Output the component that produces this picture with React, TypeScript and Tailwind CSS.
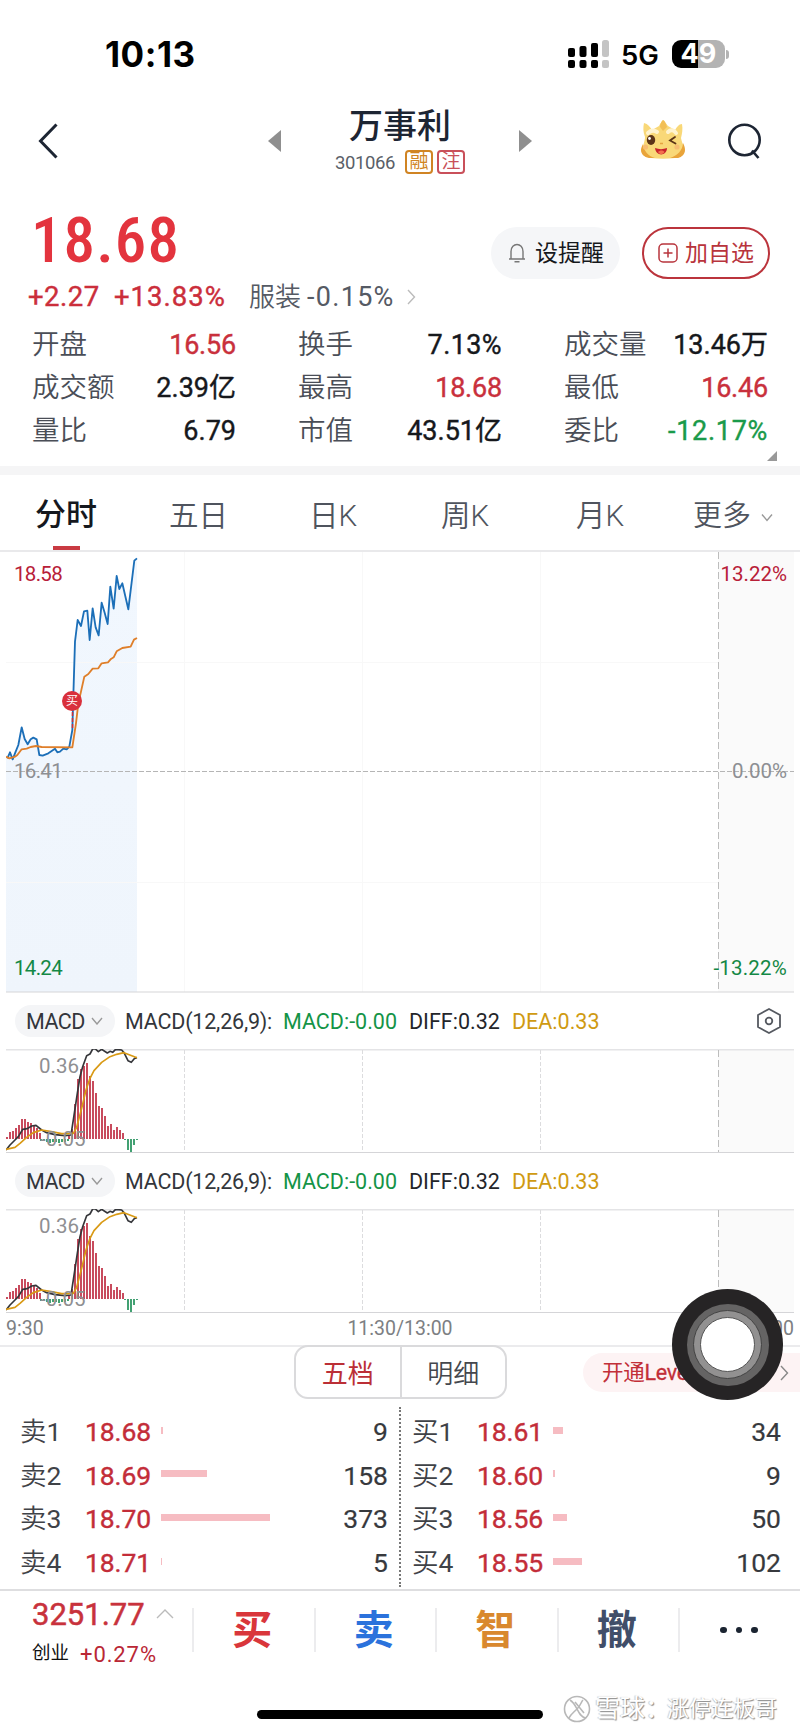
type Quote = { label: string; value: string; style?: string };
type Level = { name: string; price: string; width: number; volume: string };

const QUOTES: Quote[] = [
  { label: "开盘", value: "16.56", style: "text-[#c9303c] tracking-[-0.2px]" },
  { label: "换手", value: "7.13%", style: "text-[#16181c] tracking-[0.4px]" },
  { label: "成交量", value: "13.46万" },
  { label: "成交额", value: "2.39亿" },
  { label: "最高", value: "18.68", style: "text-[#c9303c] tracking-[-0.2px]" },
  { label: "最低", value: "16.46", style: "text-[#c9303c] tracking-[-0.2px]" },
  { label: "量比", value: "6.79" },
  { label: "市值", value: "43.51亿" },
  { label: "委比", value: "-12.17%", style: "text-[#1a9a4a] tracking-[0.7px]" },
];

const SELLS: Level[] = [
  { name: "卖1", price: "18.68", width: 2, volume: "9" },
  { name: "卖2", price: "18.69", width: 46, volume: "158" },
  { name: "卖3", price: "18.70", width: 109, volume: "373" },
  { name: "卖4", price: "18.71", width: 1, volume: "5" },
];

const BUYS: Level[] = [
  { name: "买1", price: "18.61", width: 10, volume: "34" },
  { name: "买2", price: "18.60", width: 2, volume: "9" },
  { name: "买3", price: "18.56", width: 14, volume: "50" },
  { name: "买4", price: "18.55", width: 29, volume: "102" },
];

const ACTIONS = [
  { text: "买", color: "text-[#d9363b]" },
  { text: "卖", color: "text-[#2b72dc]" },
  { text: "智", color: "text-[#d9882e]" },
  { text: "撤", color: "text-[#414e69]" },
];

// Chart lines are plotted at 3 units per pixel
const PRICE_LINE =
  "22,655 30,637 38,658 47,635 55,615 65,562 74,597 83,613 92,598 100,593 110,598 118,645 128,647 145,640 165,626 172,637 180,635 190,626 200,628 208,620 217,570 219,500 225,305 233,240 243,258 252,214 262,212 269,300 278,205 287,262 296,286 305,188 314,218 323,252 331,140 341,206 350,108 358,147 367,130 385,208 403,62 411,55";
const AVG_LINE =
  "18,650 28,655 45,650 52,645 65,628 80,626 92,621 108,618 125,621 217,622 228,550 235,490 243,455 253,410 265,402 278,386 295,385 305,370 324,367 333,357 341,352 350,334 367,324 392,320 402,299 411,294";
const DIFF_LINE =
  "18,330 30,315 45,300 55,290 68,268 82,266 95,258 108,256 125,270 140,278 165,284 195,287 213,285 220,240 232,160 240,110 248,80 260,47 270,42 278,27 286,27 295,35 305,28 322,39 330,34 338,37 347,28 365,30 372,38 384,62 394,67 404,55 411,53";
const DEA_LINE =
  "18,328 45,322 60,310 80,292 100,278 125,270 150,274 185,281 220,280 230,262 245,205 258,150 270,115 282,92 305,67 330,50 350,43 372,38 411,53";

// [x, top] for red bars, [x, height] for green ones; zero line at y=110
const RED_BARS = [
  [7, 108], [10, 103], [13, 102], [16, 99], [19, 96], [22, 90], [25, 90], [28, 93], [31, 94], [34, 96],
  [37, 99], [40, 104], [69, 107], [72, 100], [75, 75], [78, 50], [81, 40], [84, 37], [87, 34], [90, 47],
  [93, 52], [96, 64], [99, 77], [102, 79], [105, 87], [108, 97], [111, 95], [114, 101], [117, 98],
  [120, 101], [123, 104],
];
const GREEN_BARS = [
  [41, 2], [44, 2], [47, 3], [50, 4], [53, 3], [56, 3], [59, 4], [62, 3], [65, 3], [68, 2],
  [125, 1], [128, 11], [131, 13], [134, 6], [137, 1],
];

function Chevron({ className, d = "M1 1l5 6 5-6", box = "0 0 12 8" }: { className: string; d?: string; box?: string }) {
  return (
    <svg className={className} viewBox={box} fill="none" stroke="currentColor" strokeWidth="1.4">
      <path d={d} />
    </svg>
  );
}

function StatusBar() {
  return (
    <div className="flex h-[94px] items-center pl-[105px] pt-[14px] font-['Inter',sans-serif] text-black">
      <span className="w-[463px] text-[35px] font-bold leading-[36px] tracking-[0.5px]">10:13</span>
      <svg className="h-[30px] w-[42px]" viewBox="0 0 42 30">
        <g fill="#000">
          <rect x="0" y="9" width="7" height="9" rx="2" />
          <rect x="11.5" y="7" width="7" height="11" rx="2" />
          <rect x="23" y="4" width="7" height="14" rx="2" />
          <rect x="0" y="21" width="7" height="8" rx="2" />
          <rect x="11.5" y="21" width="7" height="8" rx="2" />
          <rect x="23" y="21" width="7" height="8" rx="2" />
        </g>
        <rect x="34" y="1" width="7" height="17" rx="2.5" fill="#c4c4c4" />
        <rect x="34" y="21" width="7" height="8" rx="2" fill="#c4c4c4" />
      </svg>
      <span className="ml-[11px] mt-[2px] w-[51px] text-[27.5px] font-semibold leading-[30px]">5G</span>
      <div className="flex h-[28px] w-[53px] items-center justify-center rounded-[9px] bg-[linear-gradient(90deg,#000_50%,#b3b3b3_50%)] text-[27px] font-bold leading-[28px] text-white">
        49
      </div>
      <div className="ml-[1px] h-[9px] w-[3px] rounded-r-full bg-[#b3b3b3]" />
    </div>
  );
}

function Mascot() {
  return (
    <svg className="h-[42px] w-[46px]" viewBox="0 0 46 42">
      <path d="M4 4c4 1 6 4 8 7l7-4c1-2 3-5 4-6 2 1 3 4 5 6l7 4c2-3 4-6 7-6 1 5 0 10-1 14 1 6 4 8 3 14-2 4-5 6-9 6-8 1-16 1-24 0-4-1-7-3-8-7-1-5 2-9 2-14C3 13 3 8 4 4z" fill="#f9d878" />
      <path d="M3 25c0 6 6 13 12 14H9c-5-1-8-4-8-8 0-2 1-4 2-6zM43 24c0 7-6 13-13 15h8c4-1 7-4 7-8 0-3-1-5-2-7z" fill="#e9a43a" />
      <path d="M23 1c2 1 3 4 4 7l-4 4-3-4c0-3 1-5 3-7z" fill="#f2bf56" />
      <path d="M8 14c3-3 6-3 9-1M28 13c3-3 6-2 8 1" stroke="#fff3cf" strokeWidth="4" strokeLinecap="round" fill="none" />
      <ellipse cx="11" cy="21" rx="4.2" ry="5" fill="#5b3317" />
      <circle cx="9.5" cy="19.5" r="1.4" fill="#fff" />
      <path d="M35 18l-5 3.5 5.500 3" stroke="#5b3317" strokeWidth="1.8" fill="none" strokeLinecap="round" />
      <circle cx="5.5" cy="28" r="2.6" fill="#f7bd72" />
      <circle cx="37" cy="28" r="2.6" fill="#f7bd72" />
      <path d="M20 24.500h3" stroke="#e5a441" strokeWidth="1.5" />
      <path d="M15 29c4 1.500 8 1.500 12 0 0 8-11 9-12 0z" fill="#c8232c" />
      <path d="M18 33c2-2 5-2 6.500 0-2 3-5 2.500-6.500 0z" fill="#f2704e" />
    </svg>
  );
}

function TitleBar() {
  return (
    <div className="flex h-[94px] items-center pl-[38px]">
      <svg className="h-[36px] w-[20px]" viewBox="0 0 20 36" fill="none" stroke="#1d2533" strokeWidth="3">
        <path d="M18.500 1.500L2.500 18l16 16.500" />
      </svg>
      <svg className="ml-[210px] h-[22px] w-[13px]" viewBox="0 0 13 22">
        <path d="M13 0v22L0 11z" fill="#8f8f8f" />
      </svg>
      <div className="flex w-[238px] flex-col items-center">
        <h1 className="-mt-[3px] text-[34px] font-medium leading-[44px] text-[#1d2533]">万事利</h1>
        <div className="mt-[1px] flex h-[26px] items-center gap-[4px]">
          <span className="mr-[6px] pt-[2px] text-[18.5px] leading-[26px] tracking-[-0.4px] text-[#5a5f68]">301066</span>
          <span className="flex h-[24px] w-[28px] items-center justify-center rounded-[4px] border-2 border-[#d08423] text-[19px] leading-[20px] text-[#d08423]">融</span>
          <span className="flex h-[24px] w-[28px] items-center justify-center rounded-[4px] border-2 border-[#c9505a] text-[19px] leading-[20px] text-[#c9505a]">注</span>
        </div>
      </div>
      <svg className="h-[22px] w-[13px]" viewBox="0 0 13 22">
        <path d="M0 0v22l13-11z" fill="#8f8f8f" />
      </svg>
      <div className="-mt-[3px] ml-[108px]">
        <Mascot />
      </div>
      <svg className="ml-[41px] h-[36px] w-[36px]" viewBox="0 0 36 36" fill="none" stroke="#1d2533" strokeWidth="2.6">
        <circle cx="17.5" cy="17" r="15.2" />
        <path d="M25 27.500l6.500 7.500" />
      </svg>
    </div>
  );
}

function Summary() {
  return (
    <section className="h-[278px] pt-[18px]">
      <div className="flex h-[69px] items-center pl-[31px]">
        <span className="w-[460px] text-[63px] font-medium leading-[68px] tracking-[1.1px] text-[#e3343e] [font-stretch:75%]">18.68</span>
        <button className="mt-[24px] flex h-[52px] w-[129px] items-center rounded-full bg-[#f5f6f8] pl-[17px] text-[23px] text-[#16181c]">
          <svg className="mr-[9px] h-[20px] w-[18px]" viewBox="0 0 18 20" fill="none" stroke="#777" strokeWidth="1.4">
            <path d="M1 16h16M3 16V8.500C3 4 6 1.500 9 1.500S15 4 15 8.500V16M6.500 18.800h5" />
          </svg>
          <span className="pt-[4px]">设提醒</span>
        </button>
        <button className="ml-[22px] mt-[24px] flex h-[52px] w-[128px] items-center rounded-full border-2 border-[#bb343c] pl-[14px] text-[23px] text-[#b8343c]">
          <svg className="mr-[7px] h-[20px] w-[20px]" viewBox="0 0 20 20" fill="none" stroke="#b8343c" strokeWidth="1.5">
            <rect x="1" y="1" width="18" height="18" rx="4" />
            <path d="M10 5.500v9M5.500 10h9" />
          </svg>
          <span className="pt-[4px]">加自选</span>
        </button>
      </div>
      <div className="flex h-[44px] items-center pl-[28px] text-[27.5px] leading-[44px]">
        <span className="w-[86px] tracking-[0.5px] text-[#cb2e3b] [-webkit-text-stroke:0.4px]">+2.27</span>
        <span className="w-[135px] tracking-[1px] text-[#cb2e3b] [-webkit-text-stroke:0.4px]">+13.83%</span>
        <span className="w-[58px] text-[26px] font-[350] text-[#555a64]">服装</span>
        <span className="w-[100px] text-[27px] tracking-[1.3px] text-[#555a64]">-0.15%</span>
        <Chevron className="h-[16px] w-[9px] text-[#bbb]" box="0 0 9 16" d="M1 1l6.500 7L1 15" />
      </div>
      <div className="mt-[4px] grid grid-cols-[204px_204px_204px] gap-x-[62px] pl-[32px]">
        {QUOTES.map((q) => (
          <div key={q.label} className="flex h-[43px] items-center justify-between leading-[44px]">
            <span className="text-[27.5px] font-[350] text-[#4a4e57]">{q.label}</span>
            <span className={`text-[27px] [-webkit-text-stroke:0.4px] ${q.style ?? "text-[#16181c]"}`}>{q.value}</span>
          </div>
        ))}
      </div>
      <svg className="-mt-[1px] ml-[767px] h-[10px] w-[10px]" viewBox="0 0 10 10">
        <path d="M10 0v10H0z" fill="#999" />
      </svg>
    </section>
  );
}

function Tabs() {
  const tabs = [
    { text: "五日", width: "w-[140px]" },
    { text: "日K", width: "w-[132px]" },
    { text: "周K", width: "w-[135px]" },
    { text: "月K", width: "w-[117px]" },
  ];
  return (
    <nav className="flex h-[77px] items-end border-b-2 border-[#e9e9eb] pl-[35px] text-[29.5px] leading-[82px] text-[#4f545e]">
      <div className="flex w-[134px] flex-col">
        <span className="h-[72px] text-[31px] font-medium text-[#15181e]">分时</span>
        <span className="ml-[18px] h-[4px] w-[27px] bg-[#c93a42]" />
      </div>
      {tabs.map((t) => (
        <span key={t.text} className={`h-[75px] ${t.width}`}>
          <span className="font-[350]">{t.text}</span>
        </span>
      ))}
      <span className="h-[75px] text-[29px] font-[350]">更多</span>
      <Chevron className="mb-[28px] ml-[10px] h-[9px] w-[12px] text-[#999]" />
    </nav>
  );
}

function PriceChart() {
  return (
    <div className="relative ml-[6px] h-[441px] w-[788px] text-[20.5px] leading-[24px]">
      <svg className="block h-[441px] w-[788px]" viewBox="6 552 788 441" fill="none">
        <defs>
          <linearGradient id="area" x1="0" y1="0" x2="0" y2="1">
            <stop offset="0" stopColor="#f1f7fe" />
            <stop offset="1" stopColor="#eff5fc" />
          </linearGradient>
        </defs>
        <rect x="718" y="552" width="76" height="440" fill="#fafafa" />
        <g transform="translate(0 540) scale(0.3333)">
          <polygon points={`18,655 ${PRICE_LINE} 411,1356 18,1356`} fill="url(#area)" />
        </g>
        <path d="M6 662.500h712M6 882.500h712M184.500 552v440M362.500 552v440M540.500 552v440" stroke="#f8f8f8" />
        <path d="M718.500 552v440" stroke="#bdbdbd" strokeDasharray="7 3" />
        <path d="M6 771.500h788" stroke="#b5b5b5" strokeWidth="1.2" strokeDasharray="5 2" />
        <path d="M6 992h788" stroke="#d5d5d8" strokeWidth="1.2" />
        <g transform="translate(0 540) scale(0.3333)" strokeLinejoin="round" strokeWidth="5.5">
          <polyline points={PRICE_LINE} stroke="#1c6fb8" />
          <polyline points={AVG_LINE} stroke="#df7f2a" />
        </g>
        <path d="M72.500 706v24" stroke="#cb2e3b" strokeWidth="1.5" strokeDasharray="4 2" />
        <circle cx="72" cy="701" r="10" fill="#d9303c" />
      </svg>
      <span className="absolute left-[60px] top-[140px] text-[12px] leading-[18px] text-white">买</span>
      <span className="absolute left-[8px] top-[10px] tracking-[-0.7px] text-[#b82038]">18.58</span>
      <span className="absolute left-[8px] top-[207px] tracking-[-0.7px] text-[#8d8f93]">16.41</span>
      <span className="absolute left-[8px] top-[404px] tracking-[-0.7px] text-[#138845]">14.24</span>
      <span className="absolute right-[7px] top-[10px] text-[#b82038]">13.22%</span>
      <span className="absolute right-[7px] top-[207px] text-[#8d8f93]">0.00%</span>
      <span className="absolute right-[7px] top-[404px] tracking-[0.2px] text-[#138845]">-13.22%</span>
    </div>
  );
}

function MacdPanel({ settings = false }: { settings?: boolean }) {
  return (
    <>
      <div className="flex h-[56px] items-center pl-[15px] text-[21.5px] leading-[34px]">
        <div className="flex h-[32px] w-[100px] items-center rounded-full bg-[#f4f5f7] pl-[11px] pt-[2px] text-[#33363b]">
          <span className="w-[65px] tracking-[-0.5px]">MACD</span>
          <Chevron className="mb-[2px] h-[8px] w-[12px] text-[#999]" />
        </div>
        <span className="ml-[10px] w-[158px] pt-[2px] tracking-[-0.2px] text-[#33363b]">MACD(12,26,9):</span>
        <span className="w-[126px] pt-[2px] text-[#149447]">MACD:-0.00</span>
        <span className="w-[103px] pt-[2px] text-[#24262a]">DIFF:0.32</span>
        <span className="w-[245px] pt-[2px] text-[#cf9a12]">DEA:0.33</span>
        {settings && (
          <svg className="h-[26px] w-[24px]" viewBox="0 0 24 26" fill="none" stroke="#555960" strokeWidth="1.8">
            <path d="M12 1l11 6v12l-11 6-11-6V7z" strokeLinejoin="round" />
            <circle cx="12" cy="13" r="3.3" />
          </svg>
        )}
      </div>
      <div className="relative ml-[6px] h-[104px] w-[788px]">
        <svg className="block h-[104px] w-[788px]" viewBox="6 29 788 104" fill="none">
          <rect x="718" y="29" width="76" height="103" fill="#fafafa" />
          <path d="M6 29.500h788" stroke="#e4e4e6" strokeWidth="2" />
          <path d="M6 132.500h788" stroke="#d5d5d8" />
          <path d="M184.500 30v102M362.500 30v102M540.500 30v102" stroke="#dcdcde" strokeDasharray="4 2" />
          <path d="M718.500 30v102" stroke="#bdbdbd" strokeDasharray="7 3" />
          <g transform="translate(0 9)">
            {RED_BARS.map(([x, y]) => (
              <rect key={x} x={x - 0.8} y={y} width="1.6" height={110 - y} fill="#bb2036" />
            ))}
            {GREEN_BARS.map(([x, h]) => (
              <rect key={x} x={x - 0.8} y="110" width="1.6" height={h} fill="#168a52" />
            ))}
          </g>
          <g transform="translate(0 20) scale(0.3333)" strokeLinejoin="round" strokeWidth="5">
            <polyline points={DIFF_LINE} stroke="#35363a" />
            <polyline points={DEA_LINE} stroke="#d99a15" />
          </g>
        </svg>
        <span className="absolute left-[33px] top-[5px] text-[20.5px] leading-[24px] text-[#8f8f92]">0.36</span>
        <span className="absolute left-[34px] top-[79px] text-[20.5px] leading-[22px] text-[#8f8f92]">-0.05</span>
      </div>
    </>
  );
}

function LevelList({ levels, className }: { levels: Level[]; className: string }) {
  return (
    <div className={`flex flex-col pt-[3px] text-[26.5px] leading-[43px] ${className}`}>
      {levels.map((l) => (
        <div key={l.name} className="flex h-[43.6px] items-center">
          <span className="w-[65px] font-[350] text-[#3f4247]">
            {l.name.charAt(0)}
            <span className="font-normal">{l.name.slice(1)}</span>
          </span>
          <span className="w-[76px] tracking-[-0.1px] text-[#c32d39] [-webkit-text-stroke:0.4px]">{l.price}</span>
          <span className="mb-[3px] h-[7px] bg-[#f6bcc2]" style={{ width: l.width }} />
          <span className="ml-auto text-[#37393d] [-webkit-text-stroke:0.2px]">{l.volume}</span>
        </div>
      ))}
    </div>
  );
}

function OrderBook() {
  return (
    <section className="h-[244px]">
      <div className="flex h-[62px] items-start border-t-2 border-[#ebebed] pl-[294px]">
        <div className="-mt-[2px] flex h-[54px] w-[213px] rounded-[14px] border-2 border-[#dadadc] bg-white text-[26px] leading-[54px]">
          <span className="flex-1 border-r-2 border-[#dadadc] text-center text-[#bb2f36]">五档</span>
          <span className="flex-1 text-center font-[350] text-[#44474d]">明细</span>
        </div>
        <div className="ml-[76px] mt-[6px] flex h-[39px] w-[217px] items-center rounded-l-full bg-[#fdf3f4] pl-[19px]">
          <span className="w-[178px] text-[21.5px] leading-[42px] tracking-[-0.3px] text-[#c22f38]">
            开通<span className="[-webkit-text-stroke:0.3px]">Level-2</span>
          </span>
          <Chevron className="h-[16px] w-[9px] text-[#888]" box="0 0 9 16" d="M1 1l6.500 7L1 15" />
        </div>
      </div>
      <div className="flex h-[182px]">
        <LevelList levels={SELLS} className="w-[388px] pl-[20px]" />
        <div className="ml-[11px] h-[180px] border-l-2 border-dotted border-[#777]" />
        <LevelList levels={BUYS} className="w-[380px] pl-[11px]" />
      </div>
    </section>
  );
}

function Divider() {
  return <span className="h-[44px] w-[2px] bg-[#ececee]" />;
}

function TradeBar() {
  return (
    <footer className="h-[145px] border-t-2 border-[#dedee0]">
      <div className="flex h-[78px] items-center pl-[32px]">
        <div className="w-[160px]">
          <div className="flex h-[44px] items-center pt-[3px]">
            <span className="w-[124px] text-[31px] leading-[42px] text-[#c8323c] [-webkit-text-stroke:0.5px]">3251.77</span>
            <Chevron className="mb-[2px] h-[10px] w-[18px] text-[#bbb]" box="0 0 18 10" d="M1 9l8-8 8 8" />
          </div>
          <div className="flex h-[34px] items-center pt-[4px]">
            <span className="w-[48px] text-[18.5px] text-[#111]">创业</span>
            <span className="text-[22px] tracking-[0.9px] text-[#ba2735]">+0.27%</span>
          </div>
        </div>
        {ACTIONS.map((a) => (
          <div key={a.text} className="flex w-[121.5px] items-center">
            <Divider />
            <span className={`flex-1 pr-[3px] pt-[1px] text-center text-[40px] font-bold leading-[60px] ${a.color}`}>{a.text}</span>
          </div>
        ))}
        <Divider />
        <div className="ml-[40px] flex gap-[9px]">
          <i className="size-[6.5px] rounded-full bg-[#1b2431]" />
          <i className="size-[6.5px] rounded-full bg-[#1b2431]" />
          <i className="size-[6.5px] rounded-full bg-[#1b2431]" />
        </div>
      </div>
      <div className="flex h-[65px] items-end pb-[5px] pl-[257px]">
        <div className="mb-[10px] h-[9px] w-[286px] shrink-0 rounded-full bg-black" />
        <div className="mb-[2px] ml-[20px] flex h-[36px] shrink-0 items-center whitespace-nowrap text-white [text-shadow:1px_1px_1px_#888,-1px_0_1px_#ccc]">
          <svg className="mr-[4px] h-[28px] w-[28px]" viewBox="0 0 28 28" fill="none" stroke="#b8b8b8" strokeWidth="1.6">
            <circle cx="14" cy="14" r="12.5" />
            <path d="M7 5c3 2 5 5 7 9s4 8 9 9M20 5c-2 2-2 5-6 9s-6 5-8 9M12 7l9 11" />
          </svg>
          <span className="w-[72px] text-[25px] leading-[36px]">雪球：</span>
          <span className="text-[22px] leading-[36px]">涨停连板哥</span>
        </div>
      </div>
    </footer>
  );
}

function AssistiveBall() {
  return (
    <div className="absolute left-[672px] top-[1289px] flex size-[111px] items-center justify-center rounded-full bg-[#262425]">
      <div className="flex size-[82px] items-center justify-center rounded-full bg-[#656464]">
        <div className="flex size-[69px] items-center justify-center rounded-full border border-[#444] bg-[#929191]">
          <div className="size-[55px] rounded-full border border-[#555] bg-white" />
        </div>
      </div>
    </div>
  );
}

export default function App() {
  return (
    <div className="relative h-[1734px] w-[800px] overflow-hidden bg-white font-['Roboto','Noto_Sans_CJK_SC',sans-serif]">
      <StatusBar />
      <TitleBar />
      <Summary />
      <div className="h-[9px] bg-[#f5f5f6]" />
      <Tabs />
      <PriceChart />
      <MacdPanel settings />
      <MacdPanel />
      <div className="grid h-[32px] grid-cols-3 items-center px-[6px] text-[19.5px] leading-[28px] text-[#7d7f83]">
        <span>9:30</span>
        <span className="text-center">11:30/13:00</span>
        <span className="text-right">15:00</span>
      </div>
      <OrderBook />
      <TradeBar />
      <AssistiveBall />
    </div>
  );
}
